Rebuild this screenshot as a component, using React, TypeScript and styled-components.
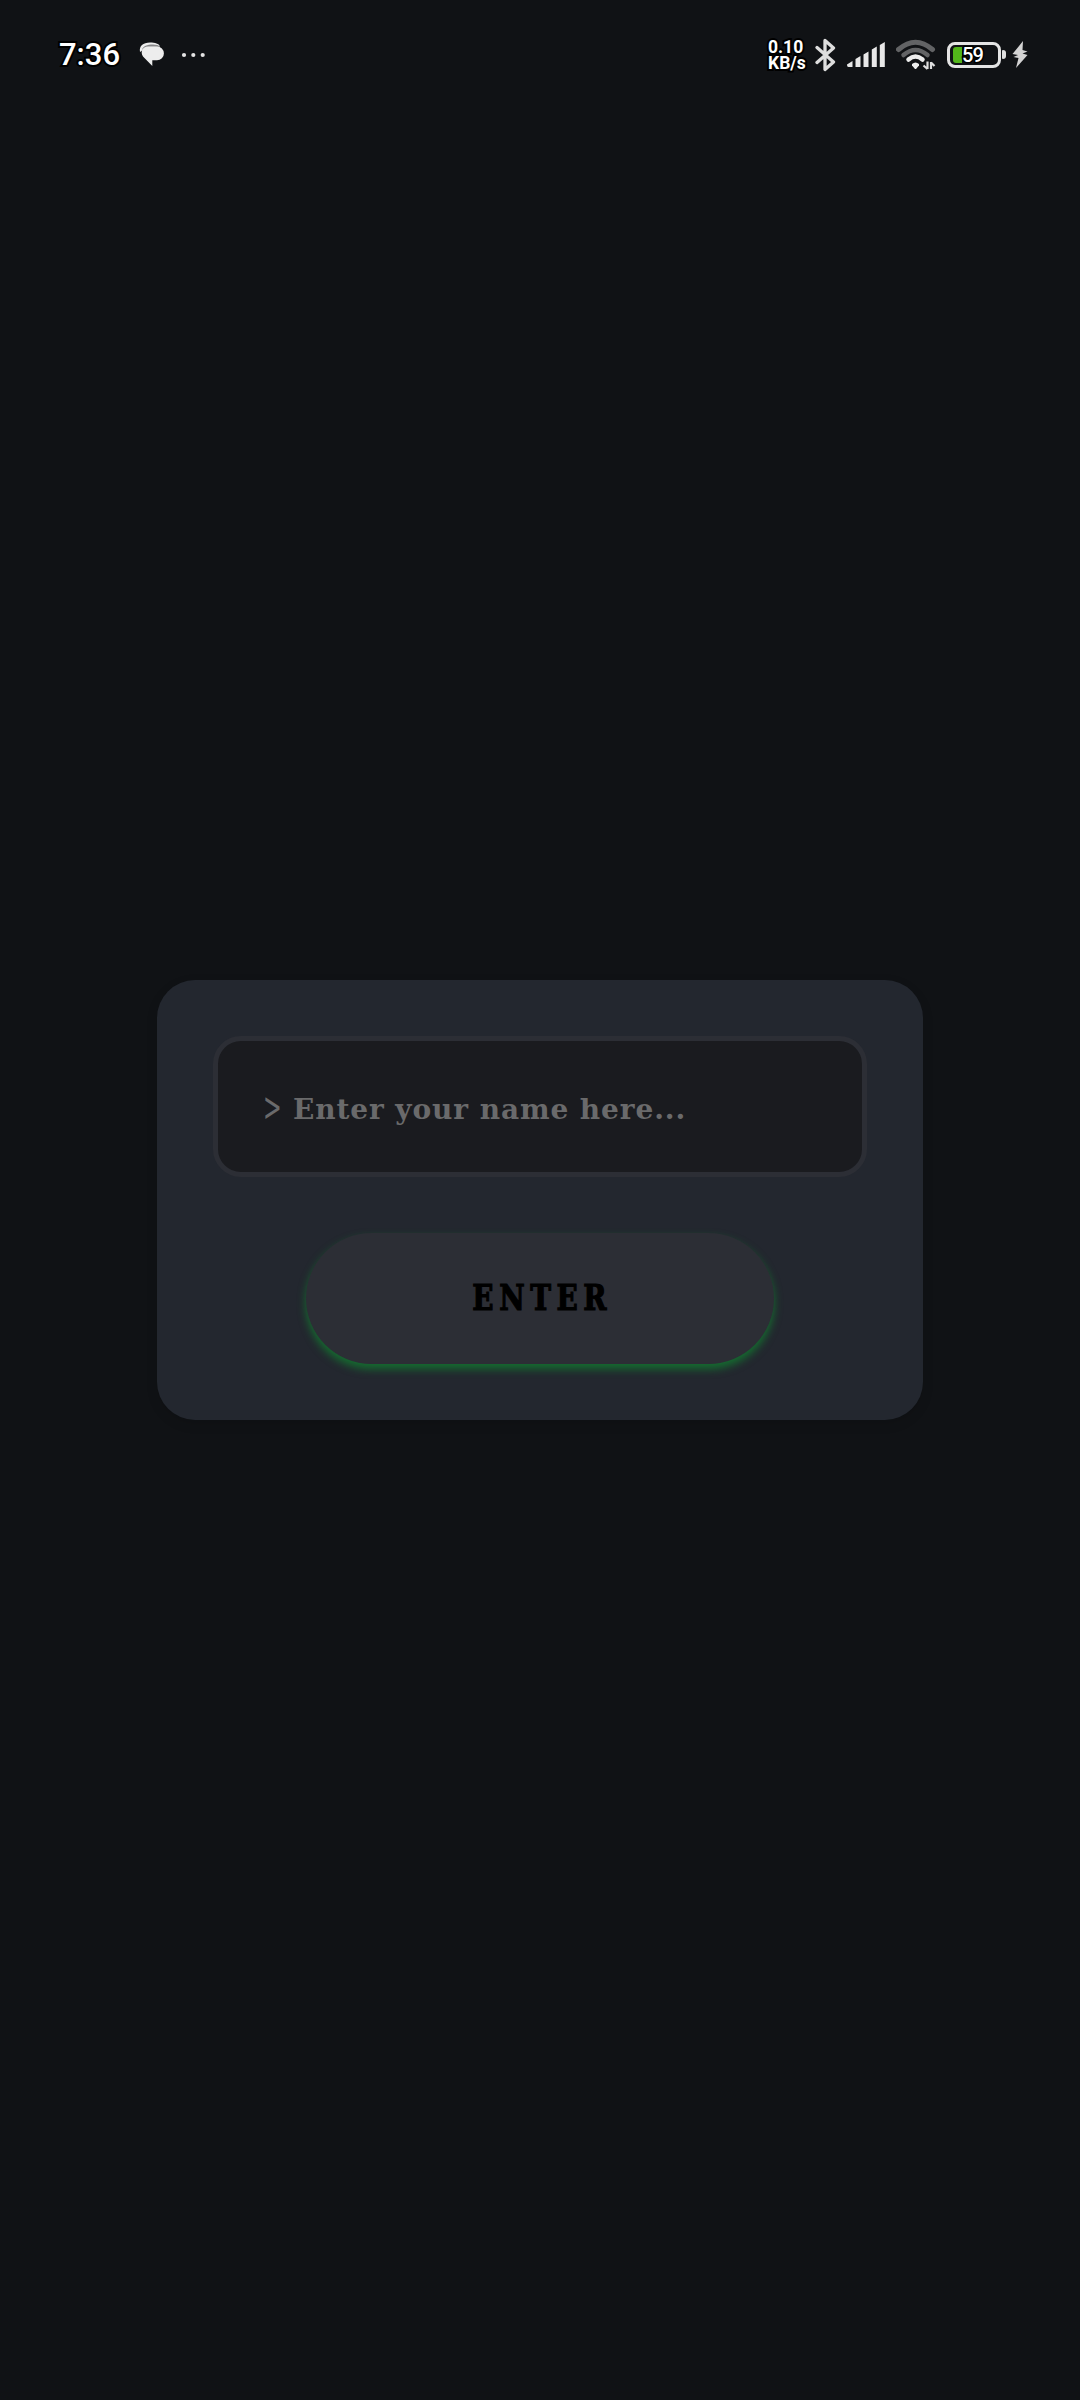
import React from "react";
import styled, { createGlobalStyle } from "styled-components";

const GlobalStyle = createGlobalStyle`
  * { box-sizing: border-box; }
  html, body { margin: 0; padding: 0; background: #101215; }
`;

const Screen = styled.div`
  width: 1080px;
  height: 2400px;
  background: #101215;
  display: flex;
  flex-direction: column;
  overflow: hidden;
`;

const StatusBar = styled.header`
  height: 108px;
  display: flex;
  justify-content: space-between;
  align-items: center;
  padding: 1px 52px 0 59px;
  font-family: Roboto, sans-serif;
  color: #fff;
`;

const StatusGroup = styled.div`
  display: flex;
  align-items: center;
`;

const outline = `
  -webkit-text-stroke: 4px #000;
  paint-order: stroke fill;
`;

const Clock = styled.span`
  width: 80px;
  font-size: 31px;
  line-height: 36px;
  padding-top: 1px;
  font-weight: 500;
  white-space: nowrap;
  ${outline}
`;

const Speed = styled.div`
  width: 46px;
  font-size: 17.5px;
  line-height: 16px;
  font-weight: 700;
  white-space: nowrap;
  ${outline}
`;

const SpeedLine = styled.div``;

const Icon = styled.svg<{ $left?: number }>`
  display: block;
  flex: none;
  margin-left: ${(p) => p.$left ?? 0}px;
`;

const Battery = styled.div`
  width: 54px;
  height: 26px;
  margin-left: 11px;
  border: 3px solid #e4e4e4;
  border-radius: 8px;
  display: flex;
  align-items: center;
  padding-left: 3px;
`;

const Charge = styled.div`
  width: 9px;
  height: 16px;
  border-radius: 3px 0 0 3px;
  background: #52b51a;
`;

const BatteryLevel = styled.span`
  font-size: 20px;
  line-height: 20px;
  padding-top: 1px;
  font-weight: 500;
  letter-spacing: -0.8px;
  -webkit-text-stroke: 3px #000;
  paint-order: stroke fill;
`;

const BatteryTip = styled.div`
  width: 4px;
  height: 9px;
  margin-left: 1px;
  border-radius: 1px 3px 3px 1px;
  background: #e0e0e0;
`;

const Main = styled.main`
  flex: 1;
  display: flex;
  justify-content: center;
  align-items: center;
  padding-bottom: 108px;
`;

const Card = styled.form`
  width: 766px;
  height: 440px;
  padding: 56px;
  border-radius: 38px;
  background: #23272f;
  box-shadow: 0 4px 12px rgba(0, 0, 0, 0.12);
  display: flex;
  flex-direction: column;
  align-items: center;
  gap: 56px;
`;

const Field = styled.label`
  width: 654px;
  height: 141px;
  padding: 6px 0 0 47px;
  border: 5px solid #2c2e35;
  border-radius: 28px;
  background: #1a1b1f;
  display: flex;
  align-items: center;
`;

const Prompt = styled.span`
  flex: none;
  width: 28px;
  font-family: "DejaVu Sans", sans-serif;
  font-size: 28px;
  line-height: 36px;
  color: #6a6a6b;
  transform: translate(-2px, -1px) scale(0.8, 1.45);
  transform-origin: 0 54%;
`;

const Placeholder = styled.span`
  font-family: "DejaVu Serif", serif;
  font-weight: 700;
  font-size: 28px;
  line-height: 36px;
  letter-spacing: 0.9px;
  color: #6a6a6b;
  white-space: nowrap;
`;

const EnterButton = styled.button`
  width: 468px;
  height: 131px;
  padding: 0 2px 4px 0;
  border: 0;
  border-radius: 66px;
  background: #2c2e35;
  box-shadow: 0 5px 8px #156d30;
  display: flex;
  justify-content: center;
  align-items: center;
`;

const ButtonText = styled.span`
  font-family: "DejaVu Serif Condensed", "DejaVu Serif", serif;
  font-stretch: condensed;
  font-weight: 700;
  font-size: 36px;
  line-height: 44px;
  letter-spacing: 6.5px;
  margin-right: -6.5px;
  color: #000;
  -webkit-text-stroke: 1.2px #000;
  transform: scaleX(0.86);
`;

export default function App() {
  return (
    <Screen>
      <GlobalStyle />
      <StatusBar>
        <StatusGroup>
          <Clock>7:36</Clock>
          <Icon width="25" height="25" viewBox="0 0 25 25">
            <path d="M1 10C0 4 4 .5 11 .5c5 0 9 1 10 4L8 5z" fill="#ededed" />
            <path d="M3 8C4 4 8 2.5 14 2.5c3 0 6 .8 7 2L8 5z" fill="#858587" />
            <path d="M9 4.5h9a6.8 6.8 0 0 1 0 13.8h-4.7V24L4 14.5C1 10 3.500 4.500 9 4.500z" fill="#ededed" />
          </Icon>
          <Icon $left={17} width="25" height="6" viewBox="0 0 25 6">
            <circle cx="3" cy="3" r="2.1" fill="#e4e4e4" />
            <circle cx="12.300" cy="3" r="2.1" fill="#e4e4e4" />
            <circle cx="21.700" cy="3" r="2.1" fill="#e4e4e4" />
          </Icon>
        </StatusGroup>
        <StatusGroup>
          <Speed>
            <SpeedLine>0.10</SpeedLine>
            <SpeedLine>KB/s</SpeedLine>
          </Speed>
          <Icon $left={1} width="22" height="34" viewBox="0 0 22 34">
            <path d="M2 9.500 18.500 24 10 31.500V2.500L18.500 10 2 24.500" fill="none" stroke="#dedede" strokeWidth="3.300" strokeLinejoin="round" strokeLinecap="round" />
          </Icon>
          <Icon $left={10} width="38" height="26" viewBox="0 0 38 26">
            <path d="M0 22.500l5.500-3.500V25H1.500Q0 25 0 23zM8.500 17l5-3v11h-5zM16.500 12.500l5-3V25h-5zM24.800 7.500l5-3V25h-5zM32.800 3l5-3v25h-5z" fill="#e8e8e8" />
          </Icon>
          <Icon $left={11} width="40" height="32" viewBox="0 0 40 32">
            <path d="M2.500 10.500Q19.500-4 36.500 10.500" fill="none" stroke="#626365" strokeWidth="5" strokeLinecap="round" />
            <path d="M7.500 16Q19.500 6 31.500 16" fill="none" stroke="#626365" strokeWidth="4.500" strokeLinecap="round" />
            <path d="M12.500 20.500Q19.500 14.500 26.500 20.500" fill="none" stroke="#ededed" strokeWidth="4.500" strokeLinecap="round" />
            <path d="M16 25q3.500-3 7 0v1.500L20 30h-1l-3-3.500z" fill="#ededed" />
            <path d="M31.500 22.500v7.500M31.500 30l-4-3.500M35 30v-7M35 23.500l3.500 3.500" fill="none" stroke="#dedede" strokeWidth="2.200" />
          </Icon>
          <Battery>
            <Charge />
            <BatteryLevel>59</BatteryLevel>
          </Battery>
          <BatteryTip />
          <Icon $left={6} width="16" height="27" viewBox="0 0 16 27">
            <path d="M11 0 .5 13l5.500 1-4.500 2 5 1-2.500 10L15.500 14l-5-1.500 5-2-5-1.500z" fill="#d3d3d3" />
          </Icon>
        </StatusGroup>
      </StatusBar>
      <Main>
        <Card onSubmit={(e) => e.preventDefault()}>
          <Field>
            <Prompt>&gt;</Prompt>
            <Placeholder>Enter your name here...</Placeholder>
          </Field>
          <EnterButton type="button">
            <ButtonText>ENTER</ButtonText>
          </EnterButton>
        </Card>
      </Main>
    </Screen>
  );
}
